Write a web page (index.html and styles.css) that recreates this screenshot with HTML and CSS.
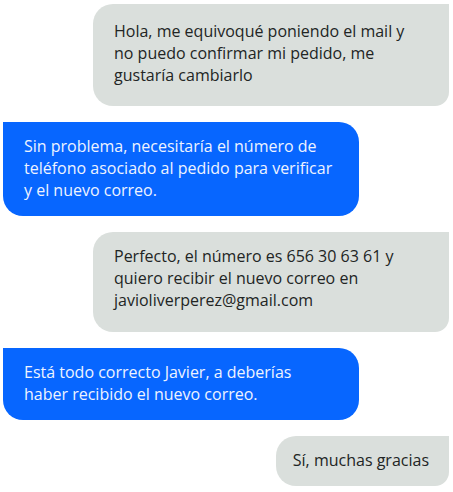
FILE: index.html
```html
<!DOCTYPE html>
<html lang="es">
<head>
<meta charset="utf-8">
<title>Chat</title>
<link rel="stylesheet" href="styles.css">
</head>
<body>
<main class="chat">
  <div class="msg msg-out msg-first">Hola, me equivoqué poniendo el mail y no puedo confirmar mi pedido, me gustaría cambiarlo</div>
  <div class="msg msg-in">Sin problema, necesitaría el número de teléfono asociado al pedido para verificar y el nuevo correo.</div>
  <div class="msg msg-out msg-third">Perfecto, el número es 656 30 63 61 y quiero recibir el nuevo correo en javioliverperez@gmail.com</div>
  <div class="msg msg-in">Está todo correcto Javier, a deberías haber recibido el nuevo correo.</div>
  <div class="msg msg-out msg-short">Sí, muchas gracias</div>
</main>
</body>
</html>
```
FILE: styles.css
```css
html, body {
  background: #ffffff;
}
body {
  margin: 4px 4px 0 3px;
  font-family: "Open Sans", "Noto Sans", sans-serif;
  font-size: 16px;
  line-height: 22px;
}
.chat {
  display: flex;
  flex-direction: column;
  gap: 16px;
}
.msg {
  box-sizing: border-box;
  width: 356px;
  padding: 13px 25px 15px 21px;
}
.msg-out {
  align-self: flex-end;
  background: #dadfdc;
  color: #222524;
  border-radius: 20px 0 14px 20px;
}
.msg-in {
  align-self: flex-start;
  background: #0766ff;
  color: #eef3ff;
  border-radius: 0 20px 20px 20px;
}
.msg-first {
  padding-top: 16px;
  padding-bottom: 20px;
}
.msg-third {
  padding-top: 13px;
  padding-bottom: 21px;
}
.msg-short {
  width: auto;
  padding: 13px 20px 15px 17px;
}
```
